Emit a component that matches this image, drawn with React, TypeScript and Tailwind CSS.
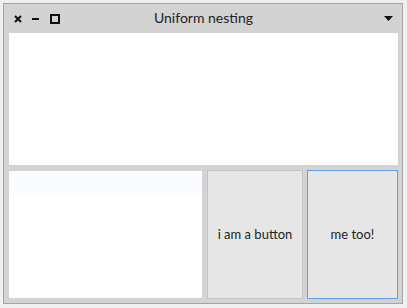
import React from 'react';

const App = () => {
  return (
    <div className="w-[407px] h-[308px] bg-[#f0f0f0] pt-[3px] pl-[3px] font-['Lato',sans-serif] text-[#222]">
      {/* Window */}
      <div className="w-[400px] h-[301px] border border-[#a4a4a4] bg-[#d3d3d3] flex flex-col">
        {/* Title bar */}
        <div className="h-[29px] grid grid-cols-[1fr_auto_1fr] items-center pl-[10px] pr-[9px]">
          <div className="flex items-center">
            <svg width="8" height="8" viewBox="0 0 8 8" className="mt-[1px]">
              <path d="M1 1 L7 7 M7 1 L1 7" stroke="#111" strokeWidth="2" />
            </svg>
            <div className="ml-[10px] w-[7px] h-[2px] bg-[#111]" />
            <div className="ml-[11px] w-[10px] h-[10px] border-2 border-[#111]" />
          </div>
          <div className="text-[14px] leading-none text-[#222] pb-[1px]">Uniform nesting</div>
          <div className="flex justify-end">
            <svg width="9" height="5" viewBox="0 0 9 5">
              <path d="M0 0 L9 0 L4.5 5 Z" fill="#111" />
            </svg>
          </div>
        </div>

        {/* Content */}
        <div className="flex-1 flex flex-col pl-[5px] pr-[4px] pb-[5px]">
          <div className="h-[132px] bg-white" />
          <div className="mt-[6px] h-[127px] flex items-center">
            <div className="w-[193px] h-[127px] bg-white pt-[5px]">
              <div className="h-[19px] bg-[#fafbfe]" />
            </div>
            <button className="ml-[5px] w-[96px] h-[129px] bg-[#e6e6e6] border border-[#c4c4c4] text-[13px] text-[#222] flex items-center justify-center">
              i am a button
            </button>
            <button className="ml-[4px] w-[91px] h-[129px] bg-[#e6e6e6] border border-[#5ea1e2] text-[13px] text-[#222] flex items-center justify-center">
              me too!
            </button>
          </div>
        </div>
      </div>
    </div>
  );
};

export default App;
